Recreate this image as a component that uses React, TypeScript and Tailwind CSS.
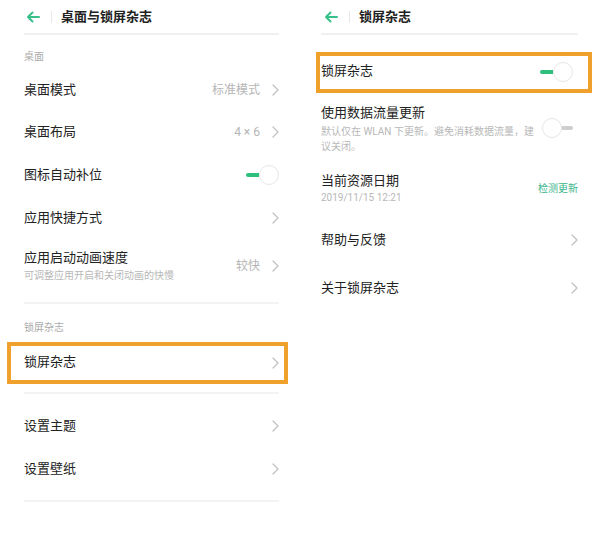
import React from "react";

const font = "font-['Roboto','Noto_Sans_CJK_SC',sans-serif]";

function BackArrow() {
  return (
    <svg width="14" height="12" viewBox="0 0 14 12" fill="none">
      <path d="M13 6H2M6.5 1.5L2 6l4.5 4.5" stroke="#37c08a" strokeWidth="2" strokeLinecap="round" strokeLinejoin="round" />
    </svg>
  );
}

function Chevron() {
  return (
    <svg width="7" height="12" viewBox="0 0 7 12" fill="none">
      <path d="M1 1l5 5-5 5" stroke="#c2c2c2" strokeWidth="1.3" strokeLinecap="round" strokeLinejoin="round" />
    </svg>
  );
}

function Toggle({ on }: { on: boolean }) {
  if (on) {
    return (
      <div className="flex items-center">
        <div className="w-[13px] h-[4px] rounded-l-full bg-[#2fbf7c]" />
        <div className="w-[20px] h-[20px] rounded-full border border-[#e6e6e6] bg-white" />
      </div>
    );
  }
  return (
    <div className="flex items-center">
      <div className="w-[20px] h-[20px] rounded-full border border-[#e6e6e6] bg-white" />
      <div className="w-[11px] h-[4px] rounded-r-full bg-[#cfcfcf]" />
    </div>
  );
}

function Header({ title, arrowMl }: { title: string; arrowMl: string }) {
  return (
    <>
      <div className="h-[33px] flex items-center">
        <div className={`${arrowMl} flex items-center`}>
          <BackArrow />
        </div>
        <div className="ml-[11px] w-px h-[12px] bg-[#e8e8e8]" />
        <div className="ml-[9px] text-[13px] leading-[18px] font-bold text-[#222]">{title}</div>
      </div>
      <div className="h-[2px] bg-[#f0f0f0]" />
    </>
  );
}

function Row({
  label,
  value,
  right,
  h,
}: {
  label: string;
  value?: string;
  right: React.ReactNode;
  h: string;
}) {
  return (
    <div className={`${h} flex items-center justify-between`}>
      <span className="text-[13px] leading-[18px] text-[#222]">{label}</span>
      <div className="flex items-center">
        {value && <span className="mr-[12px] text-[12px] text-[#b5b5b5]">{value}</span>}
        {right}
      </div>
    </div>
  );
}

function LeftPanel() {
  return (
    <div className="w-[299px] pl-[24px] pr-[20px]">
      <Header title="桌面与锁屏杂志" arrowMl="ml-[2px]" />
      <div className="h-[34px] flex items-end pb-[5px]">
        <span className="text-[10px] leading-[14px] text-[#ababab]">桌面</span>
      </div>
      <Row h="h-[42px]" label="桌面模式" value="标准模式" right={<Chevron />} />
      <Row h="h-[42px]" label="桌面布局" value="4 × 6" right={<Chevron />} />
      <Row h="h-[43px]" label="图标自动补位" right={<Toggle on />} />
      <Row h="h-[43px]" label="应用快捷方式" right={<Chevron />} />
      <div className="h-[52px] flex items-center justify-between">
        <div className="flex flex-col pt-[1px]">
          <span className="text-[13px] leading-[18px] text-[#222]">应用启动动画速度</span>
          <span className="mt-[2px] text-[10px] leading-[14px] text-[#b8b8b8]">可调整应用开启和关闭动画的快慢</span>
        </div>
        <div className="flex items-center mt-[2px]">
          <span className="mr-[12px] text-[12px] text-[#b5b5b5]">较快</span>
          <Chevron />
        </div>
      </div>
      <div className="mt-[11px] h-[2px] bg-[#f3f3f3]" />
      <div className="h-[38px] flex items-end pb-[7px]">
        <span className="text-[10px] leading-[14px] text-[#ababab]">锁屏杂志</span>
      </div>
      <div className="h-[42px] -ml-[17px] -mr-[9px] border-4 border-[#efa12b] pl-[13px] pr-[5px] flex items-center justify-between">
        <span className="text-[13px] leading-[18px] text-[#222] -mt-[2px]">锁屏杂志</span>
        <Chevron />
      </div>
      <div className="mt-[8px] h-[2px] bg-[#f3f3f3]" />
      <div className="mt-[11px]">
        <Row h="h-[42px]" label="设置主题" right={<Chevron />} />
        <Row h="h-[43px]" label="设置壁纸" right={<Chevron />} />
      </div>
      <div className="mt-[10px] h-[2px] bg-[#f3f3f3]" />
    </div>
  );
}

function RightPanel() {
  return (
    <div className="w-[300px] pl-[22px] pr-[21px]">
      <Header title="锁屏杂志" arrowMl="ml-[3px]" />
      <div className="mt-[17px] h-[41px] -ml-[5px] -mr-[14px] border-4 border-[#efa12b] pl-[1px] pr-[15px] flex items-center justify-between">
        <span className="text-[13px] leading-[18px] text-[#222] -mt-[3px]">锁屏杂志</span>
        <div className="-mt-[2px]">
          <Toggle on />
        </div>
      </div>
      <div className="flex items-start justify-between">
        <div className="flex flex-col pt-[11px]">
          <span className="text-[13px] leading-[18px] text-[#222]">使用数据流量更新</span>
          <span className="mt-[2px] w-[214px] text-[10px] leading-[15px] text-[#b8b8b8]">
            默认仅在 WLAN 下更新。避免消耗数据流量，建议关闭。
          </span>
        </div>
        <div className="mt-[25px] mr-[5px]">
          <Toggle on={false} />
        </div>
      </div>
      <div className="mt-[18px] flex items-center justify-between">
        <div className="flex flex-col">
          <span className="text-[13px] leading-[18px] text-[#222]">当前资源日期</span>
          <span className="mt-[1px] text-[10px] leading-[14px] text-[#b8b8b8]">2019/11/15 12:21</span>
        </div>
        <span className="text-[10px] text-[#3bb58b]">检测更新</span>
      </div>
      <div className="mt-[11px]">
        <Row h="h-[48px]" label="帮助与反馈" right={<Chevron />} />
        <Row h="h-[48px]" label="关于锁屏杂志" right={<Chevron />} />
      </div>
    </div>
  );
}

export default function App() {
  return (
    <div className={`${font} w-[599px] h-[541px] bg-white flex overflow-hidden`}>
      <LeftPanel />
      <RightPanel />
    </div>
  );
}
